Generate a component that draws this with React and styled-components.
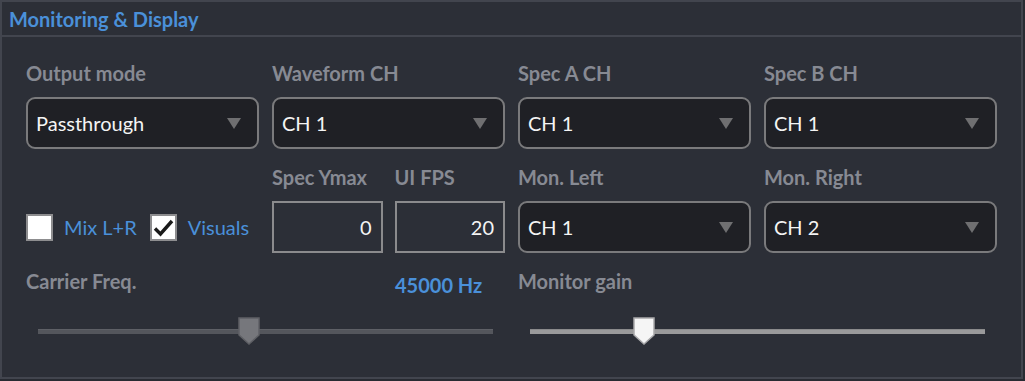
import React from "react";
import styled, { createGlobalStyle } from "styled-components";

const GlobalStyle = createGlobalStyle`
  html, body {
    margin: 0;
    padding: 0;
    background: #282b32;
  }
  * {
    box-sizing: border-box;
  }
`;

const Panel = styled.section`
  width: 1023px;
  height: 379px;
  border: 2px solid #42454e;
  background: #2c2f37;
  font-family: Lato, "Open Sans", sans-serif;
  display: flex;
  flex-direction: column;
`;

const Header = styled.header`
  height: 35px;
  border-bottom: 2px solid #42454e;
  padding: 0 7px;
  display: flex;
  align-items: center;
`;

const Title = styled.h2`
  margin: 0;
  font-size: 20px;
  font-weight: 700;
  color: #4a90d9;
  line-height: 24px;
`;

const Body = styled.div`
  padding: 25px 24px 0 24px;
  display: grid;
  grid-template-columns: repeat(4, 233px);
  column-gap: 13px;
  row-gap: 17px;
`;

const Field = styled.div`
  display: flex;
  flex-direction: column;
  gap: ${(p) => (p.$tight ? "0" : "13px")};
  grid-column: ${(p) => p.$span || "auto"};
`;

const Label = styled.div`
  font-size: 20px;
  font-weight: 700;
  color: #878a93;
  line-height: 22px;
  height: 22px;
  white-space: nowrap;
`;

const SelectBox = styled.div`
  height: 52px;
  border: 2px solid #7a7a7c;
  border-radius: 9px;
  background: #1f2025;
  display: flex;
  align-items: center;
  justify-content: space-between;
  padding: 0 16px 0 8px;
  color: #f4f4f4;
  font-size: 20px;
`;

const Arrow = styled.span`
  width: 0;
  height: 0;
  border-left: 7px solid transparent;
  border-right: 7px solid transparent;
  border-top: 11px solid #6f6f71;
`;

const Pair = styled.div`
  display: grid;
  grid-template-columns: 1fr 1fr;
  column-gap: 12px;
`;

const NumberBox = styled.div`
  height: 52px;
  border: 2px solid #8b8b8d;
  display: flex;
  align-items: center;
  justify-content: flex-end;
  padding-right: 9px;
  color: #f4f4f4;
  font-size: 20px;
`;

const CheckRow = styled.div`
  align-self: end;
  height: 52px;
  display: flex;
  align-items: center;
  white-space: nowrap;
`;

const Box = styled.span`
  flex: 0 0 27px;
  width: 27px;
  height: 27px;
  background: #ffffff;
  border: 2px solid #8d8d8f;
  display: flex;
  align-items: center;
  justify-content: center;
  margin-right: 11px;
`;

const CheckLabel = styled.span`
  color: #4a90d9;
  font-size: 20px;
  margin-right: 13px;
  white-space: nowrap;
`;

const SliderHead = styled.div`
  display: grid;
  grid-template-columns: 1fr 110px;
  height: 22px;
`;

const Value = styled.div`
  font-size: 20px;
  font-weight: 700;
  color: #4a90d9;
  line-height: 22px;
  margin-top: 4px;
  white-space: nowrap;
`;

const SliderWrap = styled.div`
  position: relative;
  height: 28px;
  margin: 25px 12px 0 12px;
`;

const Track = styled.div`
  position: absolute;
  left: 0;
  right: 0;
  top: 12px;
  height: 5px;
  background: ${(p) => (p.$active ? "#9a9a9b" : "#54565c")};
  border-top: 1px solid ${(p) => (p.$active ? "#8a8a8b" : "#5e6066")};
`;

const Thumb = styled.svg`
  position: absolute;
  top: 0;
  width: 22px;
  height: 28px;
  transform: translateX(-50%);
`;

function Select({ label, value }) {
  return (
    <Field>
      <Label>{label}</Label>
      <SelectBox>
        <span>{value}</span>
        <Arrow />
      </SelectBox>
    </Field>
  );
}

function Check({ checked, label }) {
  return (
    <>
      <Box>
        {checked && (
          <svg width="21" height="19" viewBox="0 0 21 19">
            <path
              d="M2 10.5 L7.5 16 L19 3"
              fill="none"
              stroke="#1a1a1a"
              strokeWidth="3.4"
            />
          </svg>
        )}
      </Box>
      <CheckLabel>{label}</CheckLabel>
    </>
  );
}

function Slider({ label, value, pos, active }) {
  return (
    <Field $span="span 2" $tight>
      <SliderHead>
        <Label>{label}</Label>
        {value && <Value>{value}</Value>}
      </SliderHead>
      <SliderWrap>
        <Track $active={active} />
        <Thumb viewBox="0 0 22 28" style={{ left: `${pos}%` }}>
          <path
            d="M1 1 H21 V18 L11 27 L1 18 Z"
            fill={active ? "#f5f5f5" : "#76777c"}
            stroke={active ? "#a9a9ab" : "#5f6065"}
            strokeWidth="1.5"
          />
        </Thumb>
      </SliderWrap>
    </Field>
  );
}

export default function App() {
  return (
    <>
      <GlobalStyle />
      <Panel>
        <Header>
          <Title>Monitoring &amp; Display</Title>
        </Header>
        <Body>
          <Select label="Output mode" value="Passthrough" />
          <Select label="Waveform CH" value="CH 1" />
          <Select label="Spec A CH" value="CH 1" />
          <Select label="Spec B CH" value="CH 1" />

          <CheckRow>
            <Check label="Mix L+R" />
            <Check checked label="Visuals" />
          </CheckRow>
          <Pair>
            <Field>
              <Label>Spec Ymax</Label>
              <NumberBox>0</NumberBox>
            </Field>
            <Field>
              <Label>UI FPS</Label>
              <NumberBox>20</NumberBox>
            </Field>
          </Pair>
          <Select label="Mon. Left" value="CH 1" />
          <Select label="Mon. Right" value="CH 2" />

          <Slider label="Carrier Freq." value="45000 Hz" pos={46.4} />
          <Slider label="Monitor gain" pos={25} active />
        </Body>
      </Panel>
    </>
  );
}
